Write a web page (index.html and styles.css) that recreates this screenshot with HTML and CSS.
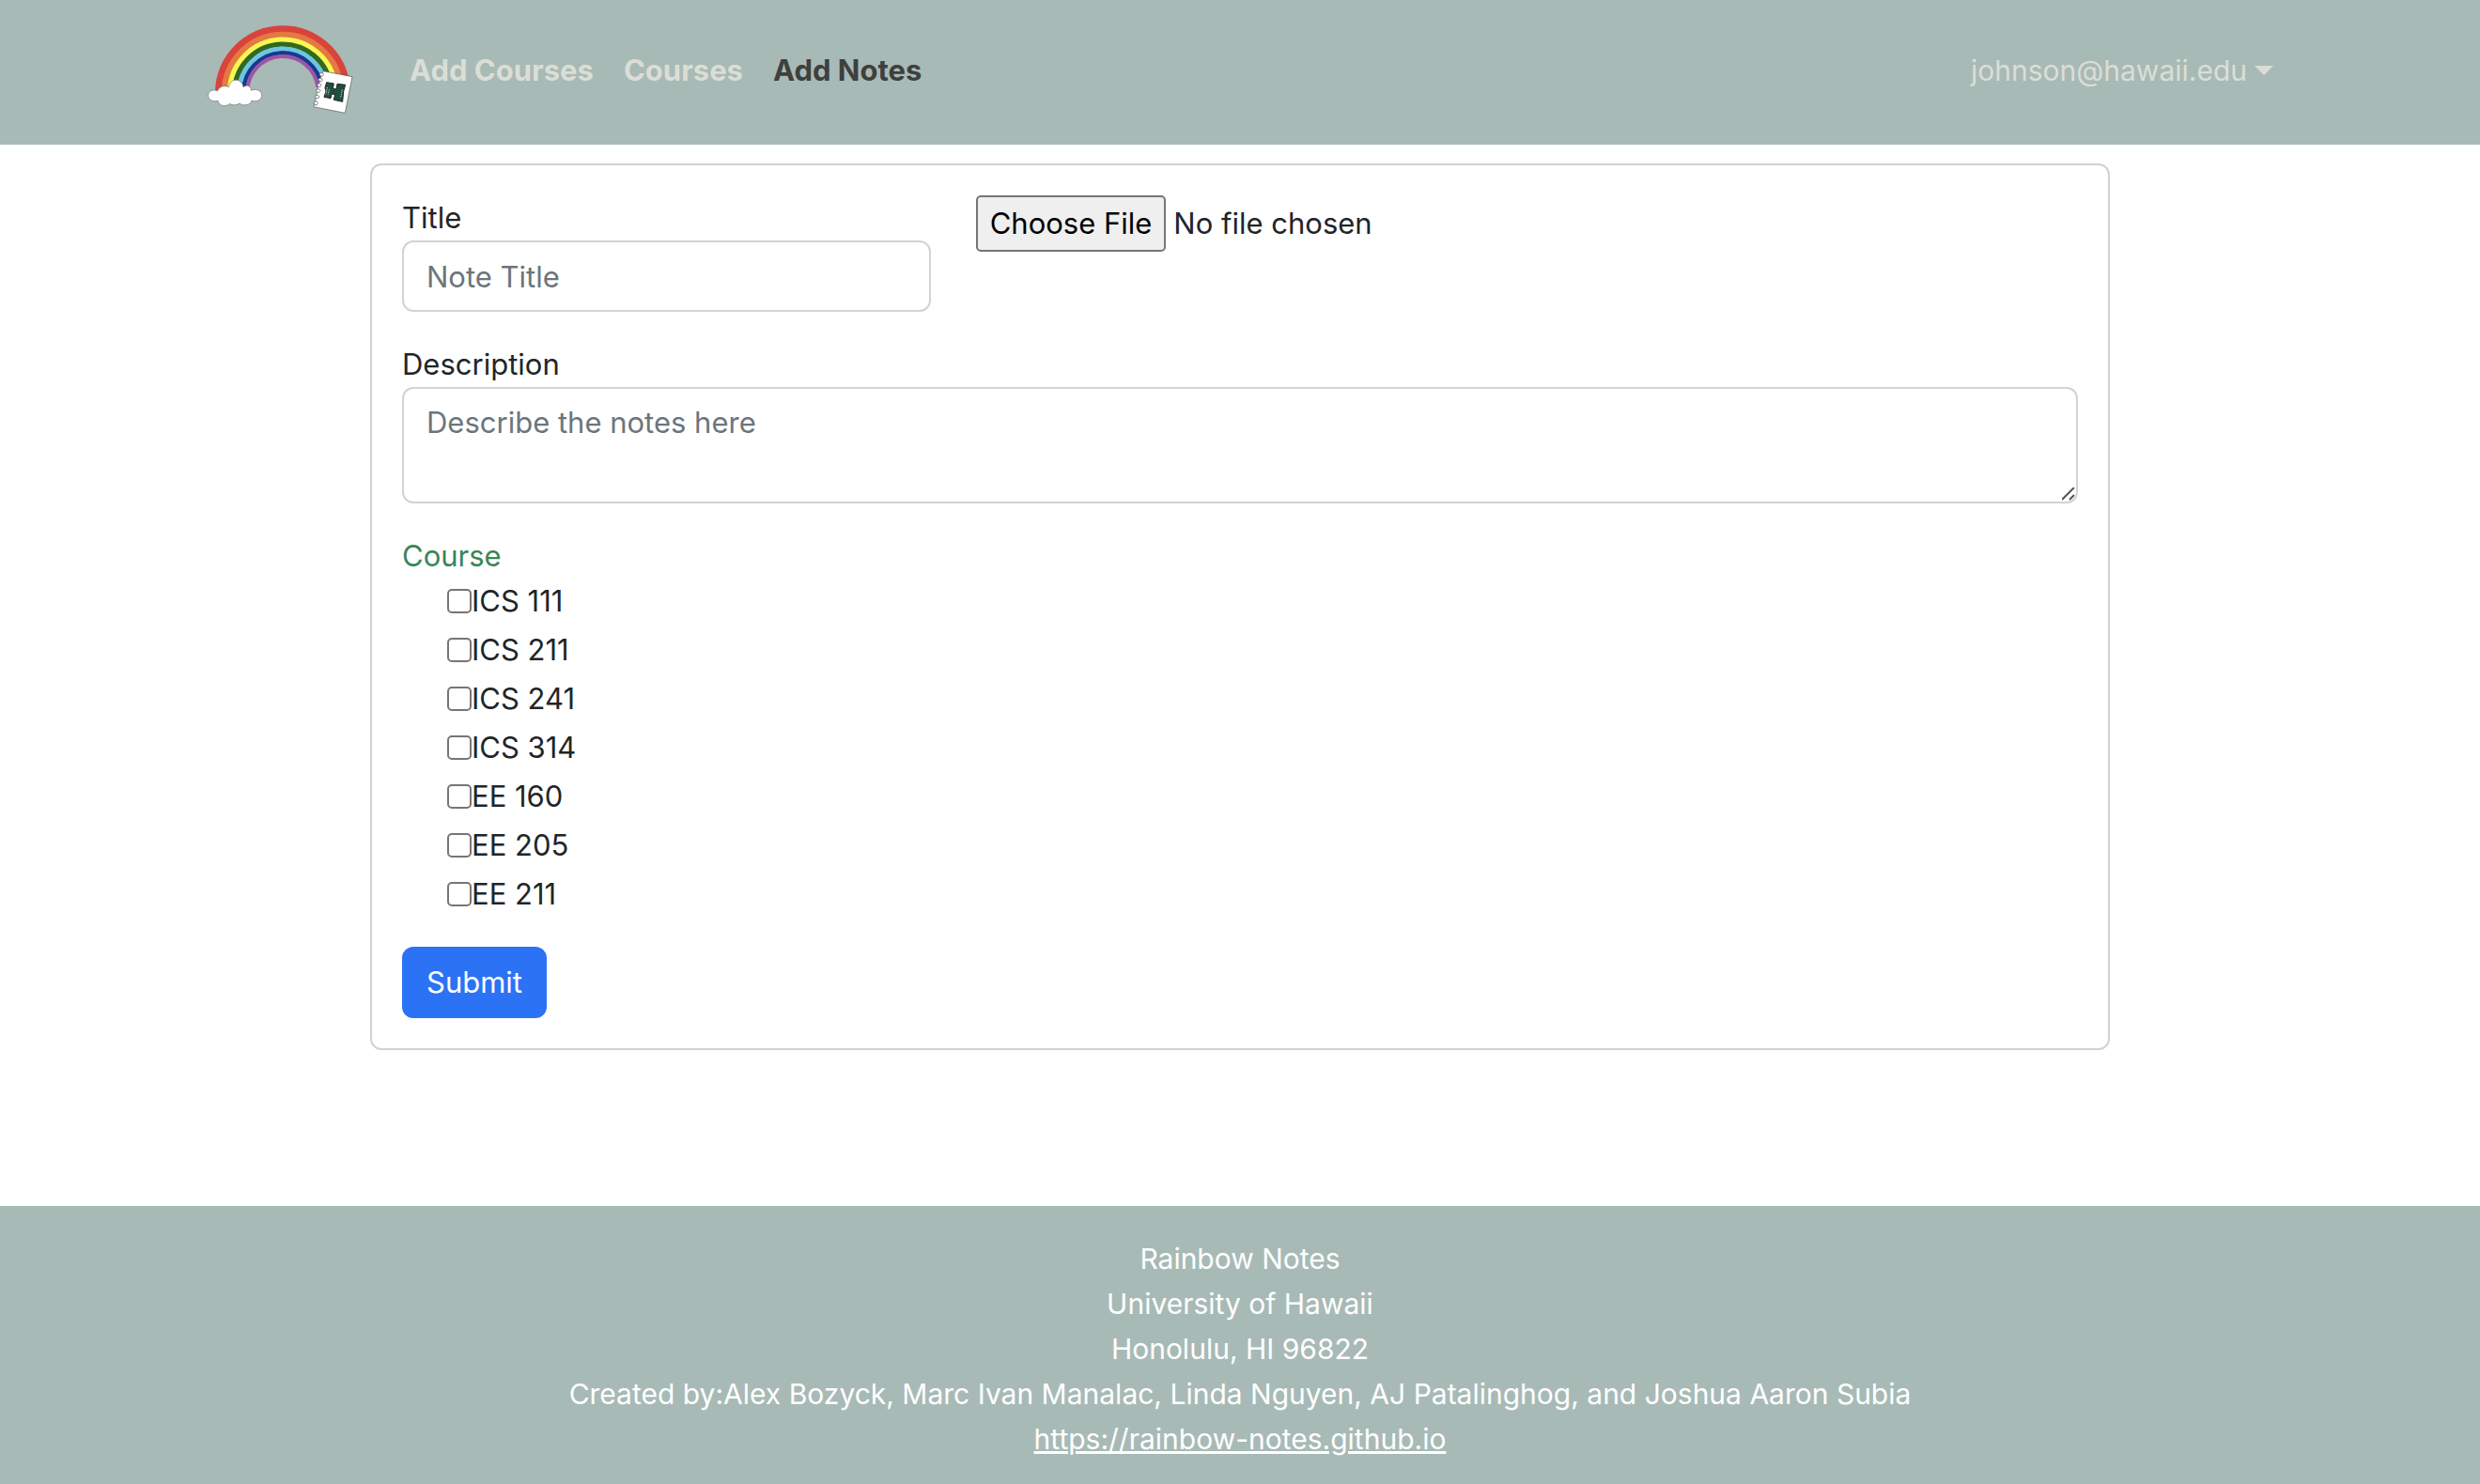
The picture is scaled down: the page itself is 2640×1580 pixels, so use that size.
FILE: index.html
```html
<!DOCTYPE html>
<html lang="en">
<head>
  <meta charset="utf-8">
  <meta name="viewport" content="width=device-width, initial-scale=1">
  <title>Rainbow Notes</title>
  <link rel="stylesheet" href="styles.css">
</head>
<body>
  <header class="navbar">
    <div class="container navbar-inner">
      <a class="brand" href="#" aria-label="Rainbow Notes home">
        <svg class="logo" viewBox="-18 18 552 366" aria-hidden="true">
          <!-- rainbow bands, outermost first -->
          <g fill="none">
            <path stroke="#d9433c" stroke-width="22" d="M68 262A205 205 0 0 1 477 248"/>
            <path stroke="#e27a42" stroke-width="19" d="M87 262A186 186 0 0 1 458 248"/>
            <path stroke="#fbf651" stroke-width="17" d="M104 262A169 169 0 0 1 441 248"/>
            <path stroke="#2f6a22" stroke-width="16" d="M119 262A154 154 0 0 1 426 248"/>
            <path stroke="#70c4e0" stroke-width="16" d="M135 262A138 138 0 0 1 410 248"/>
            <path stroke="#153a8f" stroke-width="13" d="M148 262A125 125 0 0 1 397 248"/>
            <path stroke="#9c55a5" stroke-width="12" d="M160 262A113 113 0 0 1 385 248"/>
          </g>
          <!-- cloud -->
          <path fill="#fff" stroke="#66747f" stroke-width="2" d="M66 292C48 296 35 288 35 275C35 261 50 254 65 260C70 245 88 242 101 248C104 218 143 218 147 248C159 239 172 246 172 259C190 251 207 261 206 276C205 290 188 297 174 291C169 308 145 309 135 300C125 307 111 307 104 301C91 314 69 308 66 292Z"/>
          <!-- notebook -->
          <path fill="#fff" stroke="#555" stroke-width="2" d="M402 197L495 215L472 331L371 311L375 302L384 254L392 222Z"/>
          <g fill="#fff" stroke="#444" stroke-width="2">
            <path d="M401 213C390 216 387 204 395 203C402 202 405 207 402 211"/>
            <path d="M398 230C387 233 383 221 391 220C399 219 401 224 398 228"/>
            <path d="M394 247C383 250 379 238 387 237C395 236 398 241 394 245"/>
            <path d="M391 265C380 268 376 256 384 255C392 254 395 259 391 263"/>
            <path d="M388 284C377 287 373 275 381 274C389 273 391 278 388 282"/>
            <path d="M384 305C373 308 368 296 376 294C384 293 387 298 384 302"/>
          </g>
          <!-- emblem -->
          <path fill="#1f4f40" stroke="#222" stroke-width="3" d="M413 233L436 237L433 253L444 255L447 238L473 241L467 262L464 295L436 289L440 272L429 270L426 284L405 280L411 262L408 250Z"/>
          <path fill="none" stroke="#cfdcd6" stroke-width="3" stroke-dasharray="4 3" d="M415 249L411 272M463 256L458 282M421 256L418 272"/>
        </svg>
      </a>
      <nav class="nav" aria-label="Main">
        <a class="nav-link" href="#">Add Courses</a>
        <a class="nav-link" href="#">Courses</a>
        <a class="nav-link active" href="#" aria-current="page">Add Notes</a>
      </nav>
      <button class="user-menu" type="button" aria-haspopup="true">johnson@hawaii.edu<span class="caret"></span></button>
    </div>
  </header>

  <main class="page">
    <form class="card">
      <div class="form-row">
        <div class="field">
          <label for="title">Title</label>
          <input class="control" id="title" type="text" placeholder="Note Title">
        </div>
        <input class="file" type="file" aria-label="Note file">
      </div>
      <div class="field">
        <label for="description">Description</label>
        <textarea class="control area" id="description" placeholder="Describe the notes here"></textarea>
      </div>
      <fieldset class="courses">
        <legend>Course</legend>
        <label class="check"><input type="checkbox" name="course">ICS 111</label>
        <label class="check"><input type="checkbox" name="course">ICS 211</label>
        <label class="check"><input type="checkbox" name="course">ICS 241</label>
        <label class="check"><input type="checkbox" name="course">ICS 314</label>
        <label class="check"><input type="checkbox" name="course">EE 160</label>
        <label class="check"><input type="checkbox" name="course">EE 205</label>
        <label class="check"><input type="checkbox" name="course">EE 211</label>
      </fieldset>
      <button class="submit" type="submit">Submit</button>
    </form>
  </main>

  <footer class="footer">
    <p>Rainbow Notes</p>
    <p>University of Hawaii</p>
    <p>Honolulu, HI 96822</p>
    <p>Created by:Alex Bozyck, Marc Ivan Manalac, Linda Nguyen, AJ Patalinghog, and Joshua Aaron Subia</p>
    <p><a href="https://rainbow-notes.github.io">https://rainbow-notes.github.io</a></p>
  </footer>
</body>
</html>
```

FILE: styles.css
```css
*,
*::before,
*::after {
  box-sizing: border-box;
}

body {
  margin: 0;
  min-height: 100vh;
  display: flex;
  flex-direction: column;
  font-family: Inter, "Liberation Sans", sans-serif;
  font-size: 31px;
  line-height: 48px;
  color: #212529;
  background: #fff;
}

input,
textarea,
button {
  font: inherit;
}

.container {
  width: 100%;
  max-width: 2280px;
  margin: 0 auto;
  padding: 0 24px;
}

/* Navigation */
.navbar {
  padding: 16px 0;
  background: #a8bab6;
}

.navbar-inner {
  display: flex;
  align-items: center;
}

.brand {
  margin-right: 32px;
}

.logo {
  display: block;
  width: 184px;
  height: 122px;
}

.nav {
  display: flex;
}

.nav-link,
.user-menu {
  padding: 14px 16px 18px;
  color: #dbded5;
}

.nav-link {
  font-weight: 700;
  text-decoration: none;
}

.nav-link.active {
  color: #3e403d;
}

.user-menu {
  display: flex;
  align-items: center;
  gap: 8px;
  margin-left: auto;
  border: 0;
  background: none;
  font-size: 30px;
}

.caret {
  border: 10px solid transparent;
  border-top-color: currentColor;
  border-bottom: 0;
}

/* Note form */
.page {
  width: 100%;
  max-width: 1900px;
  margin: 0 auto;
  padding: 20px 24px;
}

.card {
  padding: 32px;
  border: 2px solid #d2d2d2;
  border-radius: 12px;
}

.form-row {
  display: grid;
  grid-template-columns: repeat(3, 1fr);
  column-gap: 48px;
}

.field {
  display: flex;
  flex-direction: column;
  margin-bottom: 32px;
}

.control {
  width: 100%;
  height: 76px;
  padding: 12px 24px;
  border: 2px solid #ced4da;
  border-radius: 12px;
  background: #fff;
  color: inherit;
}

.control::placeholder {
  color: #6c757d;
  opacity: 1;
}

.area {
  height: 124px;
  resize: vertical;
}

.area::-webkit-resizer {
  background: url("data:image/svg+xml,%3Csvg xmlns='http://www.w3.org/2000/svg' width='15' height='15'%3E%3Cpath d='M0 13L13 0M8 13L13 8' stroke='%23555' stroke-width='2'/%3E%3C/svg%3E") no-repeat;
}

.file {
  grid-column: span 2;
  align-self: start;
  width: 100%;
  height: 60px;
}

.file::file-selector-button {
  height: 60px;
  margin: 0 8px 0 0;
  padding: 0 13px;
  border: 2px solid #767676;
  border-radius: 5px;
  background: #efefef;
  color: #000;
  font: inherit;
}

.courses {
  display: flex;
  flex-direction: column;
  gap: 4px;
  margin: 0 0 32px;
  padding: 0 0 0 48px;
  border: 0;
}

.courses legend {
  margin-left: -48px;
  padding: 0;
  color: #3a8557;
}

.check {
  display: flex;
  align-items: center;
  align-self: flex-start;
}

.check input {
  appearance: none;
  width: 26px;
  height: 26px;
  margin: 0;
  border: 2px solid #767676;
  border-radius: 5px;
  background: #fff;
}

.check input:checked {
  border-color: #2c72f5;
  background: #2c72f5;
}

.submit {
  height: 76px;
  padding: 0 26px;
  border: 0;
  border-radius: 12px;
  background: #2c72f5;
  color: #fff;
}

/* Footer */
.footer {
  margin-top: auto;
  padding: 32px 24px 24px;
  background: #a8bab6;
  color: #fff;
  font-size: 30px;
  text-align: center;
}

.footer p {
  margin: 0;
}

.footer a {
  color: inherit;
}
```
